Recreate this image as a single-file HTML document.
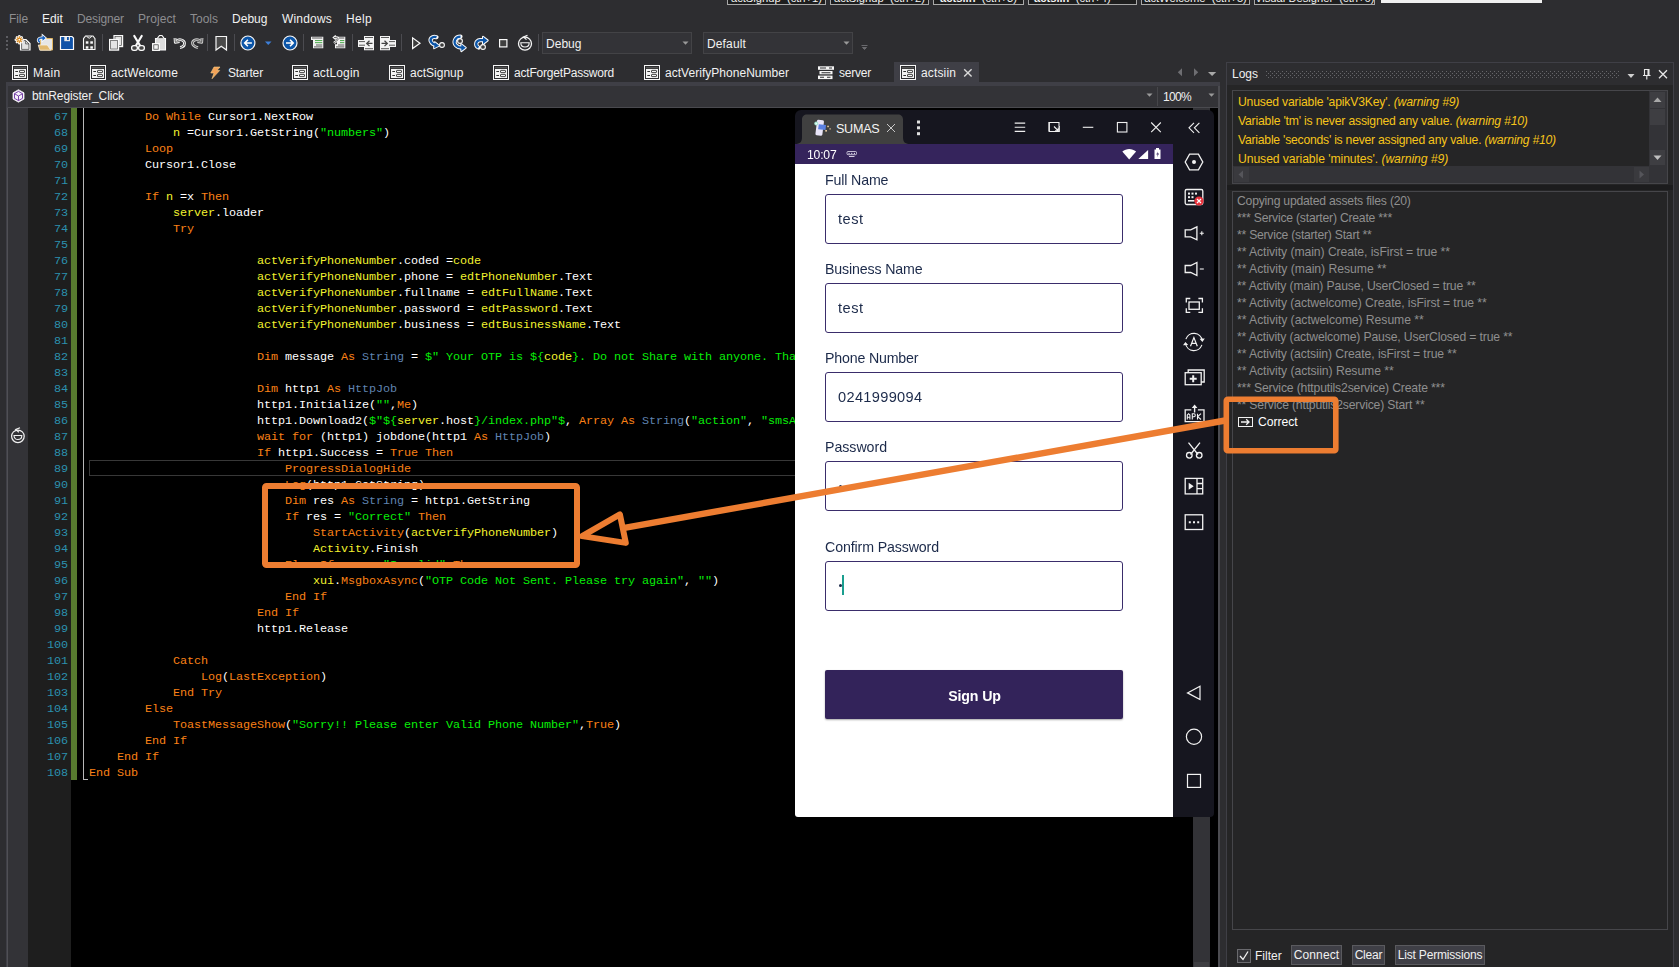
<!DOCTYPE html>
<html>
<head>
<meta charset="utf-8">
<title>B4A IDE</title>
<style>
*{box-sizing:border-box;margin:0;padding:0}
html,body{width:1679px;height:967px;overflow:hidden;background:#2d2d30}
body{font-family:"Liberation Sans",sans-serif;font-size:12px;color:#f1f1f1;position:relative}
.a{position:absolute}
.t{position:absolute;white-space:nowrap;line-height:16px;height:16px}
/* menu */
.m{top:11px;font-size:12px}
.dim{color:#8e8e90}
/* tabs */
.tb{top:65px;font-size:12px}
/* code */
#code{left:89px;top:109px;font-family:"Liberation Mono",monospace;font-size:11.800px;letter-spacing:-0.080px;line-height:16px;color:#fff;white-space:pre}
#ln{left:28px;top:109px;width:40px;text-align:right;font-family:"Liberation Mono",monospace;font-size:11.800px;letter-spacing:-0.080px;line-height:16px;color:#2b91af;white-space:pre}
.k{color:#fa8016}
.y{color:#f2f22e}
.g{color:#08ee08}
.b{color:#5f83b0}
/* logs */
.w{left:1238px;font-size:12.2px;color:#f5c41a}

.l{left:1237px;font-size:12.2px;color:#8f8f8f}
/* android */
#emu .t{will-change:transform}
.lab{left:825px;font-size:14.2px;color:#1c2a4a;line-height:18px;height:18px}
.inp{left:825px;width:298px;height:50px;border:1px solid #3a2d6b;border-radius:3px;background:#fff}
.val{left:838px;font-size:14.6px;color:#1c2a4a;line-height:18px;height:18px}
.btn{white-space:nowrap;border:1px solid #5a5a5e;background:#3f3f46;font-size:12px;line-height:19px;height:20px;text-align:center;color:#f1f1f1;top:945px}
</style>
</head>
<body>
<!-- ======= TOP CLIPPED SHORTCUT BUTTONS ======= -->
<div id="topbtns">
<div class="a" style="left:727px;top:-15px;width:99px;height:20px;border:1px solid #a8a8a8;background:#1e1e1e;font-size:11.200px;line-height:24.700px;text-align:center;overflow:hidden;white-space:nowrap">actSignup &nbsp;(ctrl+1)</div>
<div class="a" style="left:830px;top:-15px;width:99px;height:20px;border:1px solid #a8a8a8;background:#1e1e1e;font-size:11.200px;line-height:24.700px;text-align:center;overflow:hidden;white-space:nowrap">actSignup &nbsp;(ctrl+2)</div>
<div class="a" style="left:933px;top:-15px;width:91px;height:20px;border:1px solid #a8a8a8;background:#1e1e1e;font-size:11.200px;line-height:24.700px;text-align:center;overflow:hidden;white-space:nowrap"><b>actsiin</b> &nbsp;(ctrl+3)</div>
<div class="a" style="left:1028px;top:-15px;width:109px;height:20px;border:1px solid #a8a8a8;background:#1e1e1e;font-size:11.200px;line-height:24.700px;text-align:left;overflow:hidden;white-space:nowrap;padding-left:5px"><b>actsiin</b> &nbsp;(ctrl+4)</div>
<div class="a" style="left:1141px;top:-15px;width:109px;height:20px;border:1px solid #a8a8a8;background:#1e1e1e;font-size:11.200px;line-height:24.700px;text-align:center;overflow:hidden;white-space:nowrap">actWelcome &nbsp;(ctrl+5)</div>
<div class="a" style="left:1254px;top:-15px;width:121px;height:20px;border:1px solid #a8a8a8;background:#1e1e1e;font-size:11.200px;line-height:24.700px;text-align:center;overflow:hidden;white-space:nowrap">Visual Designer &nbsp;(ctrl+6)</div>
<div class="a" style="left:1381px;top:0;width:161px;height:3px;background:#f0f0f0"></div>
</div>
<!-- ======= MENU ======= -->
<div id="menu">
<div class="t m dim" style="left:9px;letter-spacing:-0.086px">File</div>
<div class="t m" style="left:42px;letter-spacing:0.078px">Edit</div>
<div class="t m dim" style="left:77px;letter-spacing:-0.129px">Designer</div>
<div class="t m dim" style="left:138px;letter-spacing:0.092px">Project</div>
<div class="t m dim" style="left:190px;letter-spacing:-0.003px">Tools</div>
<div class="t m" style="left:232px;letter-spacing:0.025px">Debug</div>
<div class="t m" style="left:282px;letter-spacing:0.188px">Windows</div>
<div class="t m" style="left:346px;letter-spacing:0.328px">Help</div>
</div>
<!-- ======= TOOLBAR ======= -->
<div id="toolbar">
<svg class="a" style="left:0;top:28px" width="880" height="30" viewBox="0 28 880 30" fill="none">
<!-- grip -->
<g fill="#5d5d62"><rect x="6" y="36" width="2" height="2"/><rect x="6" y="40" width="2" height="2"/><rect x="6" y="44" width="2" height="2"/><rect x="6" y="48" width="2" height="2"/></g>
<!-- separators -->
<g stroke="#4b4b50" stroke-width="1"><path d="M102.5 34v17M207.5 34v17M234.5 34v17M303.5 34v17M352.5 34v17M401.5 34v17M538.5 34v17"/></g>
<!-- new -->
<path d="M20.500 39.500h5.500l4 4v6.500h-9.500z" fill="#e2e2e2" stroke="#fafafa" stroke-width="1.200"/><path d="M21.600 40.600h4l3.300 3.300v5.500h-7.300z" fill="#e2e2e2" stroke="#3c3c3c" stroke-width="0.700"/><path d="M25.600 40.600v3.300h3.300" stroke="#3c3c3c" stroke-width="0.700"/>
<g stroke="#fafafa" stroke-width="2.600" stroke-linecap="round"><path d="M19.300 36.200v7M15.800 39.700h7M16.900 37.300l4.800 4.800M21.700 37.300l-4.800 4.800"/></g>
<g stroke="#d9830f" stroke-width="1.100"><path d="M19.300 36.200v7M15.800 39.700h7M16.900 37.300l4.800 4.800M21.700 37.300l-4.800 4.800"/></g><circle cx="19.300" cy="39.700" r="0.900" fill="#fff"/>
<!-- open -->
<path d="M40.500 38.500h12v11.500h-12z" fill="#e6e6e6" stroke="#e2b661" stroke-width="1"/><path d="M38.300 45h9l3.500 5.200h-11z" fill="#e2b96e" stroke="#f6f0e4" stroke-width="0.800"/>
<path d="M39.800 42.300c-2.500-1.500-1.500-4.300 1.500-4.300h2" stroke="#fafafa" stroke-width="3"/><path d="M42.300 34.700l3.800 3.300-3.800 3.300z" fill="#fafafa" stroke="#fafafa" stroke-width="1.200"/>
<path d="M39.800 42.300c-2.500-1.500-1.500-4.300 1.500-4.300h2" stroke="#1560c0" stroke-width="1.600"/><path d="M42.500 35.300l3.200 2.700-3.200 2.700z" fill="#1560c0"/>
<!-- save -->
<path d="M60.500 36.500h11.500l1.500 1.500v11.500h-13z" fill="#0f52a8" stroke="#fafafa" stroke-width="1.200"/><rect x="64.300" y="37" width="5.700" height="4.200" fill="#e4e4e4"/><rect x="67" y="37" width="1.800" height="3" fill="#0f52a8"/>
<!-- 4 boxes -->
<path d="M83.500 38.700l2-2.700h7.500l2 2.700v10.800h-11.500z" fill="#3a3a3a" stroke="#fafafa" stroke-width="1.100"/><path d="M86.500 36.300l2.700 2 2.700-2" stroke="#fafafa" stroke-width="1" fill="none"/><g fill="#fafafa"><rect x="85.800" y="41.300" width="2.600" height="2.400"/><rect x="90.300" y="41.300" width="2.600" height="2.400"/><rect x="85.800" y="46.300" width="2.600" height="2.400"/><rect x="90.300" y="46.300" width="2.600" height="2.400"/></g>
<!-- copy -->
<rect x="114" y="35.600" width="8.600" height="11" fill="#e4e4e4" stroke="#fafafa" stroke-width="1.200"/><rect x="115" y="36.600" width="6.600" height="9" fill="#e4e4e4" stroke="#3c3c3c" stroke-width="0.600"/><rect x="109.600" y="39.500" width="9" height="10.600" fill="#e4e4e4" stroke="#fafafa" stroke-width="1.200"/><rect x="110.700" y="40.600" width="6.800" height="8.400" fill="#e4e4e4" stroke="#3c3c3c" stroke-width="0.600"/>
<!-- cut -->
<g stroke="#fafafa" stroke-width="2.200" stroke-linecap="round"><path d="M134.300 36l5.700 9.500M141.700 36l-5.700 9.500"/></g>
<rect x="131.600" y="45.700" width="5.800" height="4.600" rx="2.200" fill="#444" stroke="#fafafa" stroke-width="1.300"/><rect x="138.600" y="45.700" width="5.800" height="4.600" rx="2.200" fill="#444" stroke="#fafafa" stroke-width="1.300"/>
<!-- paste -->
<path d="M155.500 38.500h10v11.500h-10z" fill="#dcdcdc" stroke="#fafafa" stroke-width="1.100"/><path d="M157.500 38.200l2-2.700h2.500l2 2.700" stroke="#fafafa" stroke-width="1.100" fill="#3a3a3a"/>
<rect x="152.600" y="43.600" width="6.800" height="6.800" fill="#f4f4f4" stroke="#fafafa" stroke-width="1.100"/><rect x="153.800" y="44.800" width="4.400" height="4.400" fill="#f4f4f4" stroke="#3a3a3a" stroke-width="0.700"/>
<!-- undo -->
<g stroke="#fafafa" stroke-width="2.800" stroke-linejoin="round"><path d="M176.500 41c3-2.500 8-1 8 2.300 0 2.700-2.300 4-4.500 4.200"/><path d="M175 38l.3 4.300 4.200-.8"/></g>
<g stroke="#3a3a3a" stroke-width="0.800"><path d="M176.500 41c3-2.500 8-1 8 2.300 0 2.700-2.300 4-4.500 4.200"/><path d="M175 38l.3 4.300 4.200-.8"/></g>
<!-- redo -->
<g stroke="#d0d0d0" stroke-width="2.800" stroke-linejoin="round"><path d="M200.500 41c-3-2.500-8-1-8 2 0 2.500 3 4 5.500 4.700"/><path d="M202 38l-.3 4.300-4.200-.8"/></g>
<g stroke="#3a3a3a" stroke-width="0.800"><path d="M200.500 41c-3-2.500-8-1-8 2 0 2.500 3 4 5.500 4.700"/><path d="M202 38l-.3 4.300-4.200-.8"/></g>
<!-- bookmark -->
<path d="M216 36.500h10.500v13.500l-5.250-3.800-5.250 3.800z" fill="#4a4a4a" stroke="#f5f5f5" stroke-width="1.200"/>
<!-- back -->
<circle cx="247.900" cy="43" r="7" fill="#0b55a8" stroke="#f5f5f5" stroke-width="1.200"/><path d="M251.900 43h-7M247.900 39.800l-3.200 3.200 3.200 3.200" stroke="#fff" stroke-width="1.600"/>
<path d="M265 41.500h6.500l-3.250 3.500z" fill="#3d7fd8"/>
<!-- fwd -->
<circle cx="290" cy="43" r="7" fill="#0b55a8" stroke="#f5f5f5" stroke-width="1.200"/><path d="M286 43h7M290 39.800l3.200 3.200-3.200 3.200" stroke="#fff" stroke-width="1.600"/>
<!-- indent list -->
<path d="M311 36.800h12.300v11.400h-10.300v-8.200h-2z" fill="#f4f4f4"/><g stroke="#333" stroke-width="0.800"><path d="M312 38h10.300M316 45h6.300M314 46.900h8.300"/></g><g stroke="#2f9a2f" stroke-width="0.900"><path d="M315 40.600h7.300M315 42.700h7.300"/></g>
<path d="M337 36.800h8.300v11.400h-10.300v-4h2z" fill="#f4f4f4"/><g stroke="#333" stroke-width="0.800"><path d="M339 38h5.300M338 45h6.300M336 46.900h8.300"/></g><g stroke="#2f9a2f" stroke-width="0.900"><path d="M340 40.600h4.300M340 42.700h4.300"/></g>
<path d="M334 37.500h2.500c2 0 2 3 0 3.500l-2.500 2" stroke="#f4f4f4" stroke-width="2.400" fill="none"/><path d="M335.800 35.500l-2.300 2 2.300 2" stroke="#f4f4f4" stroke-width="1.600" fill="none"/>
<path d="M334 37.500h2.500c2 0 2 3 0 3.500l-2.500 2" stroke="#333" stroke-width="0.700" fill="none"/>
<!-- collapse / expand -->
<path d="M364 36h10v4h-10zM358 40h16v7h-16zM364 47h10v3.300h-10z" fill="#f4f4f4"/><g stroke="#333" stroke-width="0.800"><path d="M365 37.500h8M365 48.700h8M359 41.600h6M359 45.200h6"/></g><path d="M372.500 43.400h-5.500M369.500 40.700l-2.800 2.700 2.800 2.700" stroke="#444" stroke-width="1.300" fill="none"/>
<path d="M380 36h10v4h-10zM380 40h16v7h-16zM380 47h10v3.300h-10z" fill="#f4f4f4"/><g stroke="#333" stroke-width="0.800"><path d="M381 37.500h8M381 48.700h8M389 41.600h6M389 45.200h6"/></g><path d="M381.500 43.400h5.500M384.500 40.700l2.800 2.700-2.800 2.700" stroke="#444" stroke-width="1.300" fill="none"/>
<!-- play -->
<path d="M412.600 37.800v10.700l7.400-5.350z" fill="#3c3c3c" stroke="#fafafa" stroke-width="1.200"/>
<!-- step in -->
<path d="M436.500 37.200c-4.500-1.500-7.200 2-5.200 5 1 1.700 2.600 2.400 4.700 2.700" stroke="#fafafa" stroke-width="4.200" stroke-linecap="round"/><path d="M434.800 42.200l4.300 3.500-5 2.500z" fill="#fafafa" stroke="#fafafa" stroke-width="2" stroke-linejoin="round"/><path d="M436.500 37.200c-4.500-1.500-7.200 2-5.200 5 1 1.700 2.600 2.400 4.700 2.700" stroke="#0b55a8" stroke-width="2.300"/><path d="M434.800 42.200l4.300 3.500-5 2.500z" fill="#0b55a8"/><circle cx="442" cy="45" r="2.400" fill="#3c3c3c" stroke="#fafafa" stroke-width="1.100"/>
<!-- step over -->
<path d="M460.500 36.600c-5.500 0-7.500 5.500-4.500 8.800 1.700 1.800 4 2.300 6 2.300" stroke="#fafafa" stroke-width="4.200" stroke-linecap="round"/><path d="M461.300 44.300l4.500 3.400-4.500 3.400z" fill="#fafafa" stroke="#fafafa" stroke-width="2" stroke-linejoin="round"/><path d="M460.500 36.600c-5.500 0-7.500 5.500-4.500 8.800 1.700 1.800 4 2.300 6 2.300" stroke="#0b55a8" stroke-width="2.300"/><path d="M461.300 44.300l4.500 3.400-4.500 3.400z" fill="#0b55a8"/><circle cx="460" cy="41" r="2.400" fill="#3c3c3c" stroke="#fafafa" stroke-width="1.100"/>
<!-- step out -->
<path d="M478.500 47.500c-3.500-1.800-3-6.700 1.500-7.400h4" stroke="#fafafa" stroke-width="4.200" stroke-linecap="round"/><path d="M483 36.700l4.700 3.700-4.700 3.700z" fill="#fafafa" stroke="#fafafa" stroke-width="2" stroke-linejoin="round"/><path d="M478.500 47.500c-3.500-1.800-3-6.700 1.500-7.400h4" stroke="#0b55a8" stroke-width="2.300"/><path d="M483 36.700l4.700 3.700-4.700 3.700z" fill="#0b55a8"/><circle cx="483" cy="47" r="2.400" fill="#3c3c3c" stroke="#fafafa" stroke-width="1.100"/>
<!-- stop -->
<rect x="499.600" y="39.600" width="7.300" height="7.300" fill="#404040" stroke="#fafafa" stroke-width="1.200"/>
<!-- restart -->
<circle cx="525" cy="43.700" r="6.500" stroke="#f4f4f4" stroke-width="1.300"/><path d="M520.800 42.700h8.400c0 5.800-8.400 5.800-8.400 0z" stroke="#f4f4f4" stroke-width="1.100"/><path d="M527.500 35.400l-4 1.600 3 2.600" stroke="#f4f4f4" stroke-width="1.200"/>
<!-- overflow -->
<path d="M861.500 45.500h6M862.500 47.500h4l-2 2z" stroke="#6a6a6e" stroke-width="1" fill="#6a6a6e"/>
</svg>
<div class="a" style="left:542px;top:32px;width:150px;height:22px;background:#333337;border:1px solid #434346"></div>
<div class="t" style="left:546px;top:36px;font-size:12px;letter-spacing:0.025px">Debug</div>
<svg class="a" style="left:682px;top:40.500px" width="8" height="5"><path d="M0.500 0.500h6l-3 3.200z" fill="#9a9a9a"/></svg>
<div class="a" style="left:703px;top:32px;width:150px;height:22px;background:#333337;border:1px solid #434346"></div>
<div class="t" style="left:707px;top:36px;font-size:12px;letter-spacing:0.138px">Default</div>
<svg class="a" style="left:843px;top:40.500px" width="8" height="5"><path d="M0.500 0.500h6l-3 3.200z" fill="#9a9a9a"/></svg>
</div>
<!-- ======= TABS ======= -->
<div id="tabs">
<div class="a" style="left:894px;top:62px;width:85px;height:21px;background:#3f3f46"></div>
<div class="a" style="left:6px;top:82px;width:1214px;height:4px;background:#3f3f46"></div>
<svg class="a" style="left:12px;top:65px" width="16" height="15" fill="none"><rect x="0.500" y="0.500" width="15" height="14" stroke="#f6f6f6" fill="#2d2d30"/><rect x="2" y="2" width="12" height="1.400" fill="#555"/><rect x="2" y="4" width="12" height="9" fill="#f4f4f4"/><path d="M3.300 6.500h2.700M3.300 10.500h2.700" stroke="#333" stroke-width="1.100"/><rect x="7.500" y="5.400" width="5" height="2.200" rx="0.500" stroke="#333" stroke-width="0.900"/><rect x="7.500" y="9.400" width="5" height="2.200" rx="0.500" stroke="#333" stroke-width="0.900"/></svg><div class="t tb" style="left:33px;letter-spacing:0.421px">Main</div>
<svg class="a" style="left:90px;top:65px" width="16" height="15" fill="none"><rect x="0.500" y="0.500" width="15" height="14" stroke="#f6f6f6" fill="#2d2d30"/><rect x="2" y="2" width="12" height="1.400" fill="#555"/><rect x="2" y="4" width="12" height="9" fill="#f4f4f4"/><path d="M3.300 6.500h2.700M3.300 10.500h2.700" stroke="#333" stroke-width="1.100"/><rect x="7.500" y="5.400" width="5" height="2.200" rx="0.500" stroke="#333" stroke-width="0.900"/><rect x="7.500" y="9.400" width="5" height="2.200" rx="0.500" stroke="#333" stroke-width="0.900"/></svg><div class="t tb" style="left:111px;letter-spacing:0.119px">actWelcome</div>
<svg class="a" style="left:292px;top:65px" width="16" height="15" fill="none"><rect x="0.500" y="0.500" width="15" height="14" stroke="#f6f6f6" fill="#2d2d30"/><rect x="2" y="2" width="12" height="1.400" fill="#555"/><rect x="2" y="4" width="12" height="9" fill="#f4f4f4"/><path d="M3.300 6.500h2.700M3.300 10.500h2.700" stroke="#333" stroke-width="1.100"/><rect x="7.500" y="5.400" width="5" height="2.200" rx="0.500" stroke="#333" stroke-width="0.900"/><rect x="7.500" y="9.400" width="5" height="2.200" rx="0.500" stroke="#333" stroke-width="0.900"/></svg><div class="t tb" style="left:313px;letter-spacing:0.141px">actLogin</div>
<svg class="a" style="left:389px;top:65px" width="16" height="15" fill="none"><rect x="0.500" y="0.500" width="15" height="14" stroke="#f6f6f6" fill="#2d2d30"/><rect x="2" y="2" width="12" height="1.400" fill="#555"/><rect x="2" y="4" width="12" height="9" fill="#f4f4f4"/><path d="M3.300 6.500h2.700M3.300 10.500h2.700" stroke="#333" stroke-width="1.100"/><rect x="7.500" y="5.400" width="5" height="2.200" rx="0.500" stroke="#333" stroke-width="0.900"/><rect x="7.500" y="9.400" width="5" height="2.200" rx="0.500" stroke="#333" stroke-width="0.900"/></svg><div class="t tb" style="left:410px;letter-spacing:0.014px">actSignup</div>
<svg class="a" style="left:493px;top:65px" width="16" height="15" fill="none"><rect x="0.500" y="0.500" width="15" height="14" stroke="#f6f6f6" fill="#2d2d30"/><rect x="2" y="2" width="12" height="1.400" fill="#555"/><rect x="2" y="4" width="12" height="9" fill="#f4f4f4"/><path d="M3.300 6.500h2.700M3.300 10.500h2.700" stroke="#333" stroke-width="1.100"/><rect x="7.500" y="5.400" width="5" height="2.200" rx="0.500" stroke="#333" stroke-width="0.900"/><rect x="7.500" y="9.400" width="5" height="2.200" rx="0.500" stroke="#333" stroke-width="0.900"/></svg><div class="t tb" style="left:514px;letter-spacing:-0.199px">actForgetPassword</div>
<svg class="a" style="left:644px;top:65px" width="16" height="15" fill="none"><rect x="0.500" y="0.500" width="15" height="14" stroke="#f6f6f6" fill="#2d2d30"/><rect x="2" y="2" width="12" height="1.400" fill="#555"/><rect x="2" y="4" width="12" height="9" fill="#f4f4f4"/><path d="M3.300 6.500h2.700M3.300 10.500h2.700" stroke="#333" stroke-width="1.100"/><rect x="7.500" y="5.400" width="5" height="2.200" rx="0.500" stroke="#333" stroke-width="0.900"/><rect x="7.500" y="9.400" width="5" height="2.200" rx="0.500" stroke="#333" stroke-width="0.900"/></svg><div class="t tb" style="left:665px;letter-spacing:0.030px">actVerifyPhoneNumber</div>
<svg class="a" style="left:900px;top:65px" width="16" height="15" fill="none"><rect x="0.500" y="0.500" width="15" height="14" stroke="#f6f6f6" fill="#2d2d30"/><rect x="2" y="2" width="12" height="1.400" fill="#555"/><rect x="2" y="4" width="12" height="9" fill="#f4f4f4"/><path d="M3.300 6.500h2.700M3.300 10.500h2.700" stroke="#333" stroke-width="1.100"/><rect x="7.500" y="5.400" width="5" height="2.200" rx="0.500" stroke="#333" stroke-width="0.900"/><rect x="7.500" y="9.400" width="5" height="2.200" rx="0.500" stroke="#333" stroke-width="0.900"/></svg><div class="t tb" style="left:921px;letter-spacing:0.141px">actsiin</div>
<svg class="a" style="left:209px;top:65px" width="14" height="16"><path d="M5 2h6l-3 3.500h2.700l-7.700 8.300 2-5.800h-3.200z" fill="#f3a257" stroke="#f7cf86" stroke-width="0.600"/></svg><div class="t tb" style="left:228px;letter-spacing:-0.145px">Starter</div>
<svg class="a" style="left:817px;top:65px" width="18" height="15" fill="#f6f6f6"><rect x="1" y="1.300" width="16" height="3.500"/><rect x="2.500" y="6" width="13" height="3.300"/><rect x="1" y="10.600" width="14.500" height="3.500"/><path d="M3 3h6M12 3h3M4.500 7.700h9M3 12.300h4M10 12.300h3.500" stroke="#2d2d30" stroke-width="1.100"/></svg><div class="t tb" style="left:839px;letter-spacing:-0.224px">server</div>
<svg class="a" style="left:962px;top:67px" width="12" height="12"><path d="M2.200 2.200l7.400 7.400M9.600 2.200l-7.400 7.400" stroke="#d8d8d8" stroke-width="1.400"/></svg>
<svg class="a" style="left:1176px;top:67px" width="46" height="12"><path d="M6 1.300v8l-4.200-4z" fill="#6e6e72"/><path d="M18 1.300v8l4.200-4z" fill="#6e6e72"/><path d="M32 5h8.200l-4.100 4z" fill="#a8a8a8"/></svg>
</div>
<!-- ======= EDITOR ======= -->
<div id="editor">
<!-- sub dropdown bar -->
<div class="a" style="left:6px;top:86px;width:1214px;height:22px;background:#333337;border-left:2px solid #3f3f46;border-right:2px solid #4b4b50;border-bottom:1px solid #4a4a4f"></div>
<svg class="a" style="left:12px;top:89px" width="14" height="14" fill="none"><path d="M6.500 0.700l5.500 3.100v6.300l-5.500 3.100-5.500-3.100v-6.300z" fill="#f6f2fa" stroke="#f6f2fa" stroke-width="0.800"/><path d="M6.500 2.400l4 2.300v4.600l-4 2.300-4-2.300v-4.600z" stroke="#6a2fa0" stroke-width="0.900"/><path d="M2.500 4.700l4 2.300 4-2.300M6.500 7v4.600" stroke="#6a2fa0" stroke-width="0.900"/></svg>
<div class="t" style="left:32px;top:88px;font-size:12px;letter-spacing:-0.120px">btnRegister_Click</div>
<div class="a" style="left:1157px;top:87px;width:1px;height:19px;background:#46464a"></div>
<svg class="a" style="left:1146px;top:93px" width="8" height="5"><path d="M0.500 0.500h6l-3 3.200z" fill="#9a9a9a"/></svg>
<div class="t" style="left:1163px;top:89px;font-size:12px;letter-spacing:-0.676px">100%</div>
<svg class="a" style="left:1208px;top:93px" width="8" height="5"><path d="M0.500 0.500h6l-3 3.200z" fill="#9a9a9a"/></svg>
<!-- editor body -->
<div class="a" style="left:6px;top:108px;width:1214px;height:859px;background:#000;border-left:2px solid #3f3f46;border-right:2px solid #4b4b50"></div><div class="a" style="left:7px;top:108px;width:1px;height:859px;background:#505055"></div>
<div class="a" style="left:8px;top:108px;width:20px;height:859px;background:#333337"></div>
<div class="a" style="left:28px;top:108px;width:43px;height:859px;background:#1e1e1e"></div>
<div class="a" style="left:71px;top:108px;width:6px;height:672px;background:#577a2f"></div>
<div class="a" style="left:83px;top:108px;width:1px;height:672px;background:#b8b8b8"></div>
<div class="a" style="left:83px;top:779px;width:5px;height:1px;background:#b8b8b8"></div>
<!-- current line box -->
<div class="a" style="left:89px;top:460px;width:1104px;height:16px;border:1px solid #383838"></div>
<div id="ln" class="a">67
68
69
70
71
72
73
74
75
76
77
78
79
80
81
82
83
84
85
86
87
88
89
90
91
92
93
94
95
96
97
98
99
100
101
102
103
104
105
106
107
108</div>
<div id="code" class="a">        <span class="k">Do While</span> Cursor1.NextRow
            <span class="y">n</span> =Cursor1.GetString(<span class="g">"numbers"</span>)
        <span class="k">Loop</span>
        Cursor1.Close

        <span class="k">If</span> <span class="y">n</span> =x <span class="k">Then</span>
            <span class="y">server</span>.loader
            <span class="k">Try</span>

                        <span class="y">actVerifyPhoneNumber</span>.coded =<span class="y">code</span>
                        <span class="y">actVerifyPhoneNumber</span>.phone = <span class="y">edtPhoneNumber</span>.Text
                        <span class="y">actVerifyPhoneNumber</span>.fullname = <span class="y">edtFullName</span>.Text
                        <span class="y">actVerifyPhoneNumber</span>.password = <span class="y">edtPassword</span>.Text
                        <span class="y">actVerifyPhoneNumber</span>.business = <span class="y">edtBusinessName</span>.Text

                        <span class="k">Dim</span> message <span class="k">As</span> <span class="b">String</span> = <span class="g">$" Your OTP is ${</span><span class="y">code</span><span class="g">}. Do not Share with anyone. Thank you"$</span>

                        <span class="k">Dim</span> http1 <span class="k">As</span> <span class="b">HttpJob</span>
                        http1.Initialize(<span class="g">""</span>,<span class="k">Me</span>)
                        http1.Download2(<span class="g">$"${</span><span class="y">server</span>.host<span class="g">}/index.php"$</span>, <span class="k">Array As</span> <span class="b">String</span>(<span class="g">"action"</span>, <span class="g">"smsAPI"</span>, 
                        <span class="k">wait for</span> (http1) jobdone(http1 <span class="k">As</span> <span class="b">HttpJob</span>)
                        <span class="k">If</span> http1.Success = <span class="k">True Then</span>
                            <span class="k">ProgressDialogHide</span>
                            <span class="k">Log</span>(http1.GetString)
                            <span class="k">Dim</span> res <span class="k">As</span> <span class="b">String</span> = http1.GetString
                            <span class="k">If</span> res = <span class="g">"Correct"</span> <span class="k">Then</span>
                                <span class="k">StartActivity</span>(<span class="y">actVerifyPhoneNumber</span>)
                                <span class="y">Activity</span>.Finish
                            <span class="k">Else If</span> res = <span class="g">"Invalid"</span> <span class="k">Then</span>
                                <span class="y">xui</span>.<span class="k">MsgboxAsync</span>(<span class="g">"OTP Code Not Sent. Please try again"</span>, <span class="g">""</span>)
                            <span class="k">End If</span>
                        <span class="k">End If</span>
                        http1.Release

            <span class="k">Catch</span>
                <span class="k">Log</span>(<span class="k">LastException</span>)
            <span class="k">End Try</span>
        <span class="k">Else</span>
            <span class="k">ToastMessageShow</span>(<span class="g">"Sorry!! Please enter Valid Phone Number"</span>,<span class="k">True</span>)
        <span class="k">End If</span>
    <span class="k">End If</span>
<span class="k">End Sub</span></div>
<!-- margin icon -->
<svg class="a" style="left:10px;top:426px" width="16" height="18" fill="none" stroke="#f0f0f0" stroke-width="1.250"><circle cx="7.900" cy="10.300" r="6.300"/><path d="M4 9.500h7.800c0 5.400-7.800 5.400-7.800 0z" stroke-width="1.100"/><path d="M10 1.700l-4.300 1.800 3.200 2.800" stroke-width="1.200"/></svg>
<!-- v scrollbar -->
<div class="a" style="left:1193px;top:108px;width:17px;height:859px;background:#333337"></div>
<div class="a" style="left:1194px;top:962px;width:15px;height:5px;background:#3e3e42"></div>
</div>
<!-- ======= EMULATOR ======= -->
<div id="emu">
<!-- window -->
<div class="a" style="left:795px;top:110px;width:419px;height:707px;background:#16161f;border-radius:6px 6px 4px 4px"></div>
<!-- tab -->
<svg class="a" style="left:795px;top:113px" width="116" height="31"><path d="M0 31c5 0 7-2 7-7v-17.500c0-3 2-5 5-5h91c3 0 5 2 5 5v17.500c0 5 2 7 7 7z" fill="#404040"/></svg>
<!-- tab icon -->
<svg class="a" style="left:813px;top:119px" width="18" height="18" fill="none"><rect x="3.200" y="1" width="7" height="15.500" rx="1.300" fill="#e9e5f8" transform="rotate(7 6.700 8.700)"/><path d="M5.800 5.300l7.200 .7-.5 5-7.400-.8z" fill="#5b80e2"/><circle cx="3.300" cy="4.600" r="2" fill="#a8e6d4"/><circle cx="3.300" cy="4.600" r="0.900" fill="#e9fff8"/><rect x="14.300" y="6.700" width="1.500" height="1.500" fill="#f8d8a8"/><rect x="12.300" y="11" width="1.600" height="1.600" fill="#f8d8a8"/><rect x="16.500" y="9.300" width="1.200" height="1.200" fill="#f8d8a8"/></svg>
<div class="t" style="left:836px;top:121px;will-change:auto;font-size:12.6px;color:#f4f4f4;letter-spacing:-0.279px">SUMAS</div>
<svg class="a" style="left:886px;top:123px" width="10" height="10"><path d="M1 1l8 8M9 1l-8 8" stroke="#c8c8c8" stroke-width="1"/></svg>
<svg class="a" style="left:916px;top:119.700px" width="5" height="16" fill="#e0e0e0"><rect x="1" y="0.500" width="3" height="3"/><rect x="1" y="6.300" width="3" height="3"/><rect x="1" y="12.200" width="3" height="3"/></svg>
<!-- title buttons -->
<svg class="a" style="left:1010px;top:118px" width="195" height="20" fill="none" stroke="#f0f0f0" stroke-width="1.100">
<path d="M4.700 5.100h10.500M4.700 9.300h10.500M4.700 13.400h10.500"/>
<path d="M49.300 8v5.500h-10v-9h5"/><path d="M41 4.500h-2v9M39.500 4.500h9.500v4" /><path d="M44 8.500l4 4M48.300 9.500v3.200h-3.200"/>
<path d="M72.800 9.300h10.500"/>
<rect x="107.400" y="4.500" width="9.500" height="9.500"/>
<path d="M141.200 4.500l9.600 9.600M150.800 4.500l-9.600 9.600"/>
<path d="M184 4.800l-5 5 5 5M189.400 4.800l-5 5 5 5"/>
</svg>
<!-- status bar -->
<div class="a" style="left:795px;top:144px;width:378px;height:20px;background:#35245c"></div>
<div class="t" style="left:807px;top:147px;font-size:12.2px;color:#fff;letter-spacing:-0.200px">10:07</div>
<svg class="a" style="left:846px;top:151px" width="12" height="8" fill="none" stroke="#e6e2f0"><rect x="1" y="0.500" width="9.500" height="3.200" rx="1" stroke-width="0.800"/><path d="M3 5.500h5.500" stroke-width="0.900"/><path d="M3 2.300h.1M5.700 2.300h.1M8.400 2.300h.1" stroke-width="1.200" stroke-linecap="round"/></svg>
<svg class="a" style="left:1122px;top:147px" width="40" height="14" fill="#fff"><path d="M0.300 4.600c4-3.600 9.800-3.600 13.800 0l-6.900 8z"/><path d="M16.300 12h9.800v-9z"/><path d="M32.500 2.500h1.500v-1.500h3v1.500h1.500v9.500h-6z"/><path d="M35.800 4.500l-1.500 3h1.400l-.6 2.700 1.900-3.700h-1.500z" fill="#35245c"/></svg>
<!-- screen -->
<div class="a" style="left:795px;top:164px;width:378px;height:653px;background:#fff;border-radius:0 0 0 3px"></div>
<div class="t lab" style="top:171px;letter-spacing:-0.151px">Full Name</div>
<div class="a inp" style="top:194px"></div><div class="t val" style="top:210px;letter-spacing:0.492px">test</div>
<div class="t lab" style="top:260px;letter-spacing:-0.151px">Business Name</div>
<div class="a inp" style="top:283px"></div><div class="t val" style="top:299px;letter-spacing:0.492px">test</div>
<div class="t lab" style="top:349px;letter-spacing:-0.178px">Phone Number</div>
<div class="a inp" style="top:372px"></div><div class="t val" style="top:388px;letter-spacing:0.323px">0241999094</div>
<div class="t lab" style="top:438px;letter-spacing:-0.037px">Password</div>
<div class="a inp" style="top:461px"></div><div class="a" style="left:838.500px;top:484.500px;width:3px;height:3px;border-radius:2px;background:#1c2a4a"></div>
<div class="t lab" style="top:538px;letter-spacing:-0.119px">Confirm Password</div>
<div class="a inp" style="top:561px"></div><div class="a" style="left:839px;top:584px;width:3px;height:3px;border-radius:2px;background:#1c2a4a"></div>
<div class="a" style="left:842px;top:575px;width:2px;height:20px;background:#1a9e8f"></div>
<!-- button -->
<div class="a" style="left:825px;top:670px;width:298px;height:49px;background:#33235a;border-radius:2px;box-shadow:0 1px 2px rgba(0,0,0,.35)"></div>
<div class="t" style="left:825px;width:299px;text-align:center;top:686.500px;font-size:14.200px;font-weight:bold;color:#fff;line-height:18px;letter-spacing:-0.128px">Sign Up</div>
<!-- sidebar icons -->
<svg class="a" style="left:1174px;top:150px" width="40" height="650" fill="none" stroke="#f2f2f2" stroke-width="1.300">
<path d="M11.200 12l4.400-7.800h8.800l4.400 7.800-4.400 7.800h-8.800z"/><circle cx="20" cy="12" r="2" fill="#f2f2f2" stroke="none"/>
<rect x="11.200" y="39.500" width="17.600" height="15" rx="1.500"/><g fill="#f2f2f2" stroke="none"><rect x="14" y="42.600" width="2" height="2"/><rect x="17.500" y="42.600" width="2" height="2"/><rect x="21" y="42.600" width="2" height="2"/><rect x="14" y="46.200" width="2" height="2"/><rect x="17.500" y="46.200" width="2" height="2"/><rect x="14" y="50" width="6.500" height="1.600"/></g><circle cx="25" cy="51" r="4.600" fill="#e8323c" stroke="none"/><path d="M23 49l4 4M27 49l-4 4" stroke="#fff" stroke-width="1.200"/>
<path d="M11.200 79.800h5.500l6.200-3v13l-6.200-3h-5.500z"/><path d="M25.800 83.300h4M27.800 81.300v4" stroke-width="1.100"/>
<path d="M11.200 115.500h5.500l6.200-3v13l-6.200-3h-5.500z"/><path d="M25.800 119h4" stroke-width="1.100"/>
<path d="M12.300 152.500v-4h4M24.400 148.500h4v4M28.400 158.300v4h-4M16.300 162.300h-4v-4"/><rect x="15" y="152" width="10.300" height="7.300"/>
<path d="M11.900 189.100A8.500 8.500 0 0 1 28.300 190.500M27.900 194.900A8.500 8.500 0 0 1 11.500 193.500" stroke-width="1.200"/><path d="M25.600 188.800l2.800 3.200 2.400-3.600zM9 195.300l2.400-3.300 2.800 3.100z" fill="#f2f2f2" stroke="none"/><path d="M16.500 196.300l3.400-8.700 3.400 8.700M17.700 193.400h4.400" stroke-width="1.200"/>
<path d="M14.200 222.700v-2.700h16v12h-3"/><rect x="11.200" y="222.700" width="16" height="12"/><path d="M15.700 228.700h7M19.200 225.200v7" stroke-width="2"/>
<path d="M17.300 259.800h-6.100v11.800h18.800v-11.800h-6.100"/><path d="M20.600 262.500v-6" stroke-width="1.400"/><path d="M17.800 258l2.800-3.400 2.800 3.400z" fill="#f2f2f2" stroke="none"/>
<path d="M13.300 269.500v-4.500l1.300-1.300 1.300 1.300v4.500M13.300 267.300h2.600M18.300 269.500v-5.800h1.700c1.700 0 1.700 3.100 0 3.100h-1.700M23.500 263.700v5.800M27 263.700l-3.300 2.900 3.300 2.900" stroke-width="1.100"/>
<path d="M14.500 292.700l9.500 11.800M26 292.700l-9.500 11.800"/><circle cx="15.300" cy="305.300" r="2.800"/><circle cx="25.200" cy="305.300" r="2.800"/>
<rect x="11.200" y="328.400" width="17.500" height="15.500"/><path d="M23 328.400v15.500M23 333.500h5.700M23 338.700h5.700"/><path d="M14.700 332.700v7l5-3.500z" fill="#f2f2f2" stroke="none"/>
<rect x="11.200" y="364.800" width="17.500" height="14.700"/><path d="M14.800 372.200h2M19 372.200h2M23.200 372.200h2" stroke-width="2"/>
<path d="M26 536.300v13.200l-12.500-6.600z" stroke-width="1.200"/>
<circle cx="20" cy="586.800" r="7.600" stroke-width="1.200"/>
<rect x="13.500" y="624.400" width="13" height="13" stroke-width="1.200"/>
</svg>
</div>
<!-- ======= LOGS ======= -->
<div id="logs">
<div class="a" style="left:1226px;top:62px;width:448px;height:905px;background:#252526;border:1px solid #3f3f46;border-bottom:none"></div>
<div class="a" style="left:1227px;top:63px;width:446px;height:22px;background:#2d2d30"></div>
<div class="t" style="left:1232px;top:66px;font-size:12px;letter-spacing:-0.008px">Logs</div>
<svg class="a" style="left:1266px;top:71px" width="354" height="7"><defs><pattern id="dg" width="4" height="4" patternUnits="userSpaceOnUse"><rect x="0" y="0" width="1" height="1" fill="#66666a"/><rect x="2" y="2" width="1" height="1" fill="#66666a"/></pattern></defs><rect width="354" height="7" fill="url(#dg)"/></svg>
<svg class="a" style="left:1626px;top:68px" width="44" height="13" fill="none"><path d="M1.500 6h7l-3.500 4z" fill="#d0d0d0"/><path d="M18.500 7v-5.500h4.500v5.500M17 7.500h7.500M20.800 7.500v4M22 1.500v5.500" stroke="#e8e8e8" stroke-width="1.100"/><path d="M33 2.200l8 8M41 2.200l-8 8" stroke="#e8e8e8" stroke-width="1.300"/></svg>
<div class="a" style="left:1232px;top:90px;width:436px;height:94px;border:1px solid #46464a;background:#252526"></div>
<div class="a" style="left:1649px;top:91px;width:18px;height:92px;background:#333337"></div>
<div class="a" style="left:1233px;top:166px;width:434px;height:17px;background:#333337"></div>
<div class="a" style="left:1650px;top:92px;width:15px;height:16px;background:#3e3e42"></div><div class="a" style="left:1650px;top:109px;width:15px;height:16px;background:#3e3e42"></div><div class="a" style="left:1650px;top:150px;width:15px;height:15px;background:#3e3e42"></div>
<div class="a" style="left:1234px;top:167px;width:15px;height:15px;background:#3a3a3e"></div><div class="a" style="left:1634px;top:167px;width:15px;height:15px;background:#3a3a3e"></div>
<svg class="a" style="left:1653px;top:97px" width="10" height="6"><path d="M0.500 5h8l-4-4.500z" fill="#a8a8a8"/></svg><svg class="a" style="left:1653px;top:155px" width="10" height="6"><path d="M0.500 0.500h8l-4 4.500z" fill="#c0c0c0"/></svg>
<svg class="a" style="left:1238px;top:170px" width="6" height="9"><path d="M5 0.500v8l-4.500-4z" fill="#55555a"/></svg><svg class="a" style="left:1639px;top:170px" width="6" height="9"><path d="M0.500 0.500v8l4.500-4z" fill="#55555a"/></svg>
<div class="t w" style="top:94px;letter-spacing:-0.188px">Unused variable 'apikV3Key'. <i>(warning #9)</i></div>
<div class="t w" style="top:113px;letter-spacing:-0.193px">Variable 'tm' is never assigned any value. <i>(warning #10)</i></div>
<div class="t w" style="top:132px;letter-spacing:-0.237px">Variable 'seconds' is never assigned any value. <i>(warning #10)</i></div>
<div class="t w" style="top:151px;letter-spacing:-0.080px">Unused variable 'minutes'. <i>(warning #9)</i></div>
<div class="a" style="left:1227px;top:185px;width:446px;height:5px;background:#1c1c1d"></div>
<div class="a" style="left:1232px;top:191px;width:436px;height:739px;border:1px solid #46464a;background:#252526"></div>
<div class="t l" style="top:193px;letter-spacing:-0.218px">Copying updated assets files (20)</div>
<div class="t l" style="top:210px;letter-spacing:-0.218px">*** Service (starter) Create ***</div>
<div class="t l" style="top:227px;letter-spacing:-0.244px">** Service (starter) Start **</div>
<div class="t l" style="top:244px;letter-spacing:-0.064px">** Activity (main) Create, isFirst = true **</div>
<div class="t l" style="top:261px;letter-spacing:-0.034px">** Activity (main) Resume **</div>
<div class="t l" style="top:278px;letter-spacing:-0.136px">** Activity (main) Pause, UserClosed = true **</div>
<div class="t l" style="top:295px;letter-spacing:-0.079px">** Activity (actwelcome) Create, isFirst = true **</div>
<div class="t l" style="top:312px;letter-spacing:-0.047px">** Activity (actwelcome) Resume **</div>
<div class="t l" style="top:329px;letter-spacing:-0.142px">** Activity (actwelcome) Pause, UserClosed = true **</div>
<div class="t l" style="top:346px;letter-spacing:-0.090px">** Activity (actsiin) Create, isFirst = true **</div>
<div class="t l" style="top:363px;letter-spacing:-0.061px">** Activity (actsiin) Resume **</div>
<div class="t l" style="top:380px;letter-spacing:-0.167px">*** Service (httputils2service) Create ***</div>
<div class="t l" style="top:397px;letter-spacing:-0.177px">** Service (httputils2service) Start **</div>
<svg class="a" style="left:1238px;top:417px" width="15" height="10" fill="none" stroke="#f1f1f1"><rect x="0.500" y="0.500" width="14" height="9" stroke-width="1"/><path d="M3 5h8M8.200 2.300l2.800 2.700-2.800 2.700" stroke-width="1.300"/></svg>
<div class="t" style="left:1258px;top:414px;font-size:12.2px;color:#fff;letter-spacing:-0.053px">Correct</div>
<div class="a" style="left:1237px;top:949px;width:14px;height:14px;border:1px solid #6a6a6e;background:#333337"></div><svg class="a" style="left:1239px;top:951px" width="10" height="10"><path d="M1 5l3 3.500 5-8" stroke="#f1f1f1" stroke-width="1.300" fill="none"/></svg>
<div class="t" style="left:1255px;top:948px;font-size:12px;letter-spacing:0.021px">Filter</div>
<div class="a btn" style="left:1291px;width:51px;letter-spacing:0.128px">Connect</div><div class="a btn" style="left:1352px;width:33px;letter-spacing:-0.198px">Clear</div><div class="a btn" style="left:1395px;width:90px;letter-spacing:-0.179px">List Permissions</div>
</div>
<!-- ======= ANNOTATIONS ======= -->
<div id="anno">
<svg class="a" style="left:0;top:0" width="1679" height="967" fill="none">
<rect x="265" y="486" width="312" height="79" rx="1.500" stroke="#ed7d31" stroke-width="6"/>
<path d="M1228 420L623 528.100" stroke="#ed7d31" stroke-width="6.400"/>
<path d="M582.100 536.100L619.900 514.400L625.800 542.900Z" stroke="#ed7d31" stroke-width="6" stroke-linejoin="round" fill="none"/>
<rect x="1226.300" y="399.300" width="109.500" height="51.500" rx="1.500" stroke="#ed7d31" stroke-width="5.600"/>
</svg>
</div>
</body>
</html>
